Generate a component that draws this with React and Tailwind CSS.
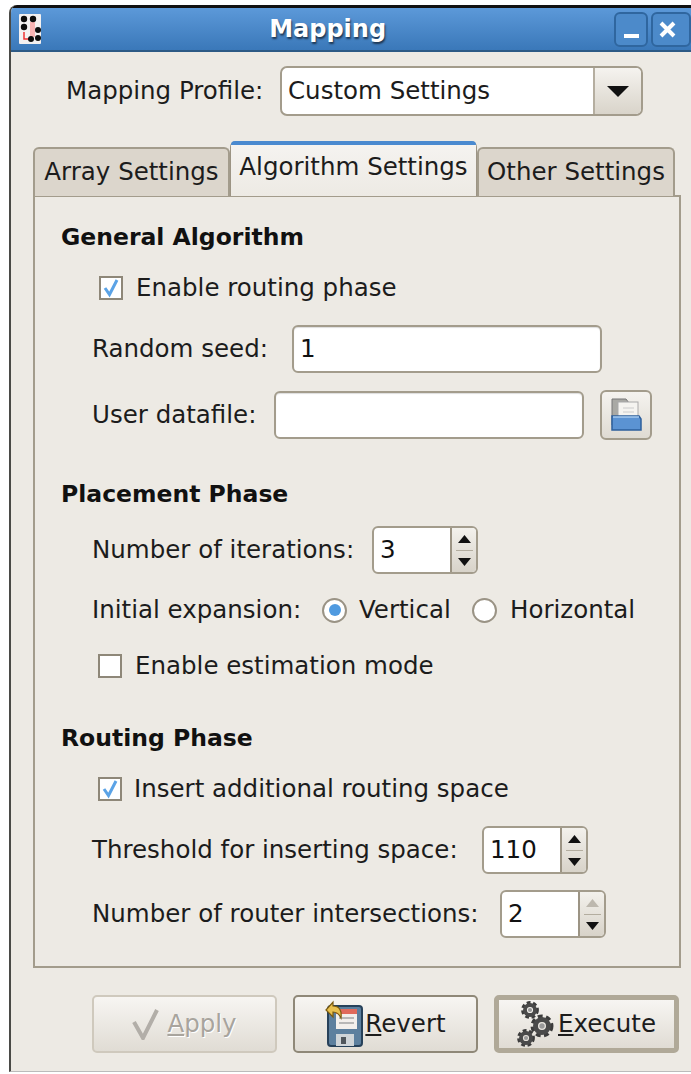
import React from 'react';

const FONT = "font-['DejaVu_Sans',sans-serif]";

// Small app icon shown at the left of the title bar
const AppIcon = () => (
  <svg width="22" height="30" viewBox="0 0 22 30" className="shrink-0">
    <rect width="22" height="30" rx="1" fill="#f4f1f1" />
    <rect x="11" y="8" width="5" height="15" fill="#f8b4b4" />
    <path d="M5 18v7h7" fill="none" stroke="#e33" strokeWidth="1.5" />
    <g fill="#0c0c0c">
      <circle cx="5" cy="5" r="3.2" />
      <circle cx="14" cy="5" r="3.2" />
      <circle cx="5" cy="13" r="3.2" />
      <circle cx="19" cy="16" r="3" />
      <circle cx="19" cy="24" r="3" />
      <circle cx="12" cy="25" r="3" />
    </g>
  </svg>
);

const Caret = ({ up, size = 'w-[22px] h-[11px]', color = '#111' }) => (
  <svg viewBox="0 0 10 5" className={size} preserveAspectRatio="none">
    <path d={up ? 'M0 5L5 0l5 5z' : 'M0 0l5 5 5-5z'} fill={color} />
  </svg>
);

const CheckBox = ({ checked, className = '' }) => (
  <div className={`w-[24px] h-[24px] shrink-0 bg-white border-2 border-[#8e8778] ${className}`}>
    {checked && (
      <svg viewBox="0 0 20 20" className="w-full h-full">
        <path d="M4 10l4.5 6.5L16 2" fill="none" stroke="#5ba3e6" strokeWidth="3" />
      </svg>
    )}
  </div>
);

const Radio = ({ selected }) => (
  <div className="w-[25px] h-[25px] shrink-0 rounded-full bg-white border-2 border-[#9a9385] flex items-center justify-center">
    {selected && <div className="w-[12px] h-[12px] rounded-full bg-[#4f9ae0]" />}
  </div>
);

const TextField = ({ width, value }) => (
  <div className={`${width} h-[48px] flex items-center pl-[6px] bg-white border-2 border-[#a39c8c] rounded-[6px] shadow-[inset_0_1px_1px_#ddd] text-[#111]`}>
    {value}
  </div>
);

const SpinBox = ({ value, upDisabled }) => (
  <div className="w-[106px] h-[48px] flex bg-white border-2 border-[#a39c8c] rounded-[6px] overflow-hidden">
    <div className="flex-1 flex items-center pl-[6px] text-[#111]">{value}</div>
    <div className="w-[26px] border-l-2 border-[#9c9484] bg-gradient-to-b from-[#f3f1ec] to-[#d8d3c9] flex flex-col items-center">
      <div className="h-[22px] flex items-center justify-center">
        <Caret up size="w-[13px] h-[8px]" color={upDisabled ? '#bdb8ae' : '#111'} />
      </div>
      <div className="w-[17px] h-px bg-[#b3ad9f]" />
      <div className="flex-1 flex items-center justify-center">
        <Caret size="w-[13px] h-[8px]" />
      </div>
    </div>
  </div>
);

const Heading = ({ className, children }) => (
  <div className={`h-[30px] flex items-center font-bold text-[#111] text-[23.5px] ${className}`}>{children}</div>
);

const FloppyIcon = () => (
  <svg width="38" height="48" viewBox="0 0 38 48" className="shrink-0">
    <rect x="3" y="6" width="34" height="40" rx="3" fill="#5c7f9e" stroke="#27415a" strokeWidth="2" />
    <rect x="11" y="9" width="21" height="20" fill="#f2efec" />
    <rect x="11" y="9" width="21" height="5" fill="#e06a5c" />
    <path d="M14 18h15M14 23h15" stroke="#b7b7b7" strokeWidth="2" />
    <rect x="11" y="34" width="18" height="12" fill="#cfd4d8" />
    <rect x="16" y="37" width="5" height="7" fill="#50565c" />
    <path d="M1 10L8 2v4c6 0 9 4 8 12-2-4-4-6-8-6v5z" fill="#e8c04f" stroke="#7a5a10" strokeWidth="1.2" />
  </svg>
);

// Three overlapping gears, drawn as dashed rings around a solid ring
const Gear = ({ cx, cy, r }) => (
  <g fill="none">
    <circle cx={cx} cy={cy} r={r} stroke="#3c3c3c" strokeWidth={r * 0.55} strokeDasharray={`${r * 0.5} ${r * 0.35}`} />
    <circle cx={cx} cy={cy} r={r * 0.72} stroke="#4a4a4a" strokeWidth={r * 0.55} />
    <circle cx={cx} cy={cy} r={r * 0.3} fill="#9a9a9a" />
  </g>
);

const GearsIcon = () => (
  <svg width="38" height="48" viewBox="0 0 38 48" className="shrink-0">
    <Gear cx="13" cy="10" r="7" />
    <Gear cx="25" cy="26" r="9" />
    <Gear cx="9" cy="38" r="7" />
  </svg>
);

const FolderIcon = () => (
  <svg width="32" height="36" viewBox="0 0 32 36">
    <path d="M2 2h14l3 4v22H2z" fill="#a9a9a4" stroke="#777" />
    <rect x="8" y="5" width="20" height="18" fill="#f5f4f0" stroke="#aaa" />
    <path d="M13 11h11M13 15h11" stroke="#ccc" />
    <path d="M2 19h27l2 3v11H2z" fill="#5b93d3" stroke="#2d5f9c" strokeWidth="1.5" />
    <path d="M3 20h26" stroke="#a5c8ee" strokeWidth="1.5" />
  </svg>
);

const PushButton = ({ children, className = '' }) => (
  <div className={`w-[185px] h-[58px] rounded-[5px] flex items-center justify-center bg-gradient-to-b from-[#f7f5f2] to-[#e0dcd4] ${className}`}>
    {children}
  </div>
);

export default function App() {
  return (
    <div className={`${FONT} w-[691px] h-[1074px] bg-white pt-[5px] pl-[9px] text-[24.5px] text-[#1c1c1c] overflow-hidden`}>
      <div className="w-[682px] h-[1067px] flex flex-col border-l-2 border-[#4a4a46] border-b border-b-[#bbb] bg-[#edeae4] rounded-tl-[8px] overflow-hidden">
        {/* title bar */}
        <div className="h-[47px] shrink-0 flex items-center pl-[8px] border-t-[3px] border-[#111] border-b-2 border-b-[#2d5a85] bg-gradient-to-b from-[#5c99d9] to-[#3a78b9]">
          <AppIcon />
          <div className="w-[578px] text-center font-bold text-white text-[24px] [text-shadow:1px_2px_2px_#1d3550]">Mapping</div>
          <div className="w-[34px] h-[35px] flex items-end justify-center pb-[7px] border-2 border-[#2f669f] rounded-[6px] bg-[#4c8aca]">
            <div className="w-[15px] h-[4px] bg-white" />
          </div>
          <div className="ml-[3px] w-[40px] h-[35px] shrink-0 flex items-center pl-[6px] border-2 border-[#2f669f] rounded-[6px] bg-[#4c8aca]">
            <svg width="17" height="17" viewBox="0 0 17 17">
              <path d="M2 2l13 13M15 2L2 15" stroke="#fff" strokeWidth="4" />
            </svg>
          </div>
        </div>

        {/* profile selector */}
        <div className="mt-[14px] h-[50px] flex items-center pl-[55px]">
          <div className="w-[214px]">Mapping Profile:</div>
          <div className="w-[363px] h-[50px] flex bg-white border-2 border-[#a39c8c] rounded-[7px] overflow-hidden">
            <div className="flex-1 flex items-center pl-[6px]">Custom Settings</div>
            <div className="w-[48px] border-l-2 border-[#b5aea0] bg-gradient-to-b from-[#f5f3ef] to-[#d9d4ca] flex items-center justify-center">
              <Caret />
            </div>
          </div>
        </div>

        {/* tabs */}
        <div className="mt-[25px] h-[55px] shrink-0 flex items-end pl-[22px] relative z-10 -mb-px">
          <div className="w-[197px] h-[49px] flex items-center justify-center border-2 border-b-0 border-[#a39c8c] rounded-t-[6px] bg-[#dcd6cc] border-b-[#a39c8c]">
            Array Settings
          </div>
          <div className="w-[247px] h-[55px] flex flex-col rounded-t-[6px] border-x border-[#9c9484] bg-[#edeae4]">
            <div className="h-[4px] rounded-t-[6px] bg-[#4a8ad0]" />
            <div className="flex-1 flex items-center justify-center pb-[6px] bg-gradient-to-b from-[#f5f3f0] to-[#edeae4]">Algorithm Settings</div>
          </div>
          <div className="w-[198px] h-[49px] flex items-center justify-center border-2 border-b-0 border-[#a39c8c] rounded-t-[6px] bg-[#dcd6cc]">
            Other Settings
          </div>
        </div>

        {/* settings page */}
        <div className="ml-[22px] w-[648px] h-[773px] shrink-0 flex flex-col border-2 border-[#a39c8c] pl-[26px]">
          <Heading className="mt-[26px]">General Algorithm</Heading>
          <div className="mt-[23px] h-[24px] flex items-center pl-[38px]">
            <CheckBox checked />
            <span className="ml-[13px]">Enable routing phase</span>
          </div>
          <div className="mt-[25px] h-[48px] flex items-center pl-[31px]">
            <span className="w-[200px]">Random seed:</span>
            <TextField width="w-[310px]" value="1" />
          </div>
          <div className="mt-[17px] h-[50px] flex items-center pl-[31px]">
            <span className="w-[182px]">User datafile:</span>
            <TextField width="w-[310px]" value="" />
            <div className="ml-[16px] w-[52px] h-[50px] flex items-center justify-center border-2 border-[#a39c8c] rounded-[6px] bg-gradient-to-b from-[#f5f3ef] to-[#dfdbd3]">
              <FolderIcon />
            </div>
          </div>

          <Heading className="mt-[40px]">Placement Phase</Heading>
          <div className="mt-[16px] h-[48px] flex items-center pl-[31px]">
            <span className="w-[280px]">Number of iterations:</span>
            <SpinBox value="3" />
          </div>
          <div className="mt-[22px] h-[28px] flex items-center pl-[31px]">
            <span className="w-[230px]">Initial expansion:</span>
            <Radio selected />
            <span className="ml-[12px] w-[113px]">Vertical</span>
            <Radio />
            <span className="ml-[13px]">Horizontal</span>
          </div>
          <div className="mt-[30px] h-[24px] flex items-center pl-[37px]">
            <CheckBox />
            <span className="ml-[13px]">Enable estimation mode</span>
          </div>

          <Heading className="mt-[46px]">Routing Phase</Heading>
          <div className="mt-[23px] h-[24px] flex items-center pl-[37px]">
            <CheckBox checked />
            <span className="ml-[12px]">Insert additional routing space</span>
          </div>
          <div className="mt-[25px] h-[48px] flex items-center pl-[31px]">
            <span className="w-[390px]">Threshold for inserting space:</span>
            <SpinBox value="110" />
          </div>
          <div className="mt-[16px] h-[48px] flex items-center pl-[31px]">
            <span className="w-[408px]">Number of router intersections:</span>
            <SpinBox value="2" upDisabled />
          </div>
        </div>

        {/* action buttons */}
        <div className="mt-[27px] flex pl-[81px] gap-[16px]">
          <PushButton className="border-2 border-[#cfc9bd] text-[#a8a49d] [text-shadow:1px_1px_0_#fff]">
            <svg width="28" height="32" viewBox="0 0 28 32" className="mr-[7px]">
              <path d="M2 14l9 16L25 2" fill="none" stroke="#b2aea8" strokeWidth="4" />
            </svg>
            <span><span className="underline">A</span>pply</span>
          </PushButton>
          <PushButton className="border-2 border-[#8f8878]">
            <FloppyIcon />
            <span className="ml-[2px]"><span className="underline">R</span>evert</span>
          </PushButton>
          <PushButton className="border-[5px] border-[#b0a998]">
            <GearsIcon />
            <span className="ml-[3px]"><span className="underline">E</span>xecute</span>
          </PushButton>
        </div>
      </div>
    </div>
  );
}
